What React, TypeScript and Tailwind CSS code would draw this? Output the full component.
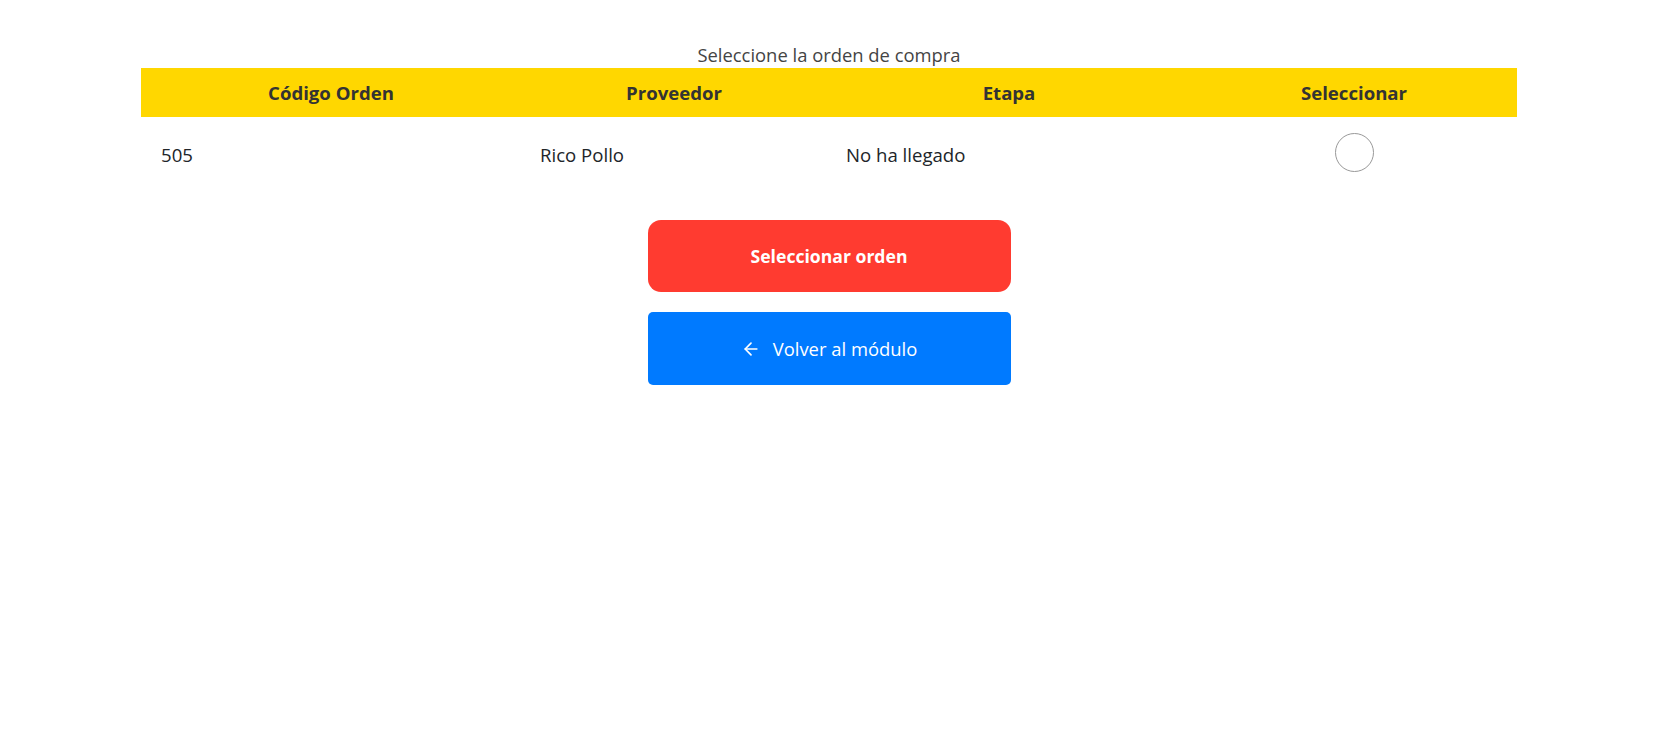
import { ArrowLeft } from "lucide-react";

const orders = [{ code: "505", provider: "Rico Pollo", stage: "No ha llegado" }];

export default function App() {
  return (
    <main className="min-h-screen bg-white text-[#212529] font-['Open_Sans',sans-serif]">
      <section className="mx-auto w-[1376px] pt-[42px]">
        <p className="text-center text-[18.4px] leading-[26px] text-[#444]">
          Seleccione la orden de compra
        </p>
        <table className="w-full border-collapse">
          <thead>
            <tr className="h-[49px] bg-[#FFD700] text-[18.6px] font-bold text-[#333]">
              <th className="w-[380px] text-center">Código Orden</th>
              <th className="w-[306px] text-center">Proveedor</th>
              <th className="w-[364px] text-center">Etapa</th>
              <th className="text-center">Seleccionar</th>
            </tr>
          </thead>
          <tbody>
            {orders.map((o) => (
              <tr key={o.code} className="h-[76px] text-[18.6px]">
                <td className="px-[20px]">{o.code}</td>
                <td className="px-[19px]">{o.provider}</td>
                <td className="px-[19px]">{o.stage}</td>
                <td className="text-center">
                  <span className="inline-block h-[39px] w-[39px] -translate-y-[3px] rounded-full border border-[#999] align-middle" />
                </td>
              </tr>
            ))}
          </tbody>
        </table>
      </section>

      <section className="mt-[27px] flex flex-col items-center gap-[20px]">
        <button
          type="button"
          className="h-[72px] w-[363px] rounded-[13px] bg-[#FF3B30] text-[17.6px] font-bold text-white"
        >
          Seleccionar orden
        </button>
        <button
          type="button"
          className="flex h-[73px] w-[363px] items-center justify-center gap-[12px] rounded-[5px] bg-[#007AFF] text-[18.4px] text-white"
        >
          <ArrowLeft size={20} strokeWidth={2} />
          Volver al módulo
        </button>
      </section>
    </main>
  );
}
